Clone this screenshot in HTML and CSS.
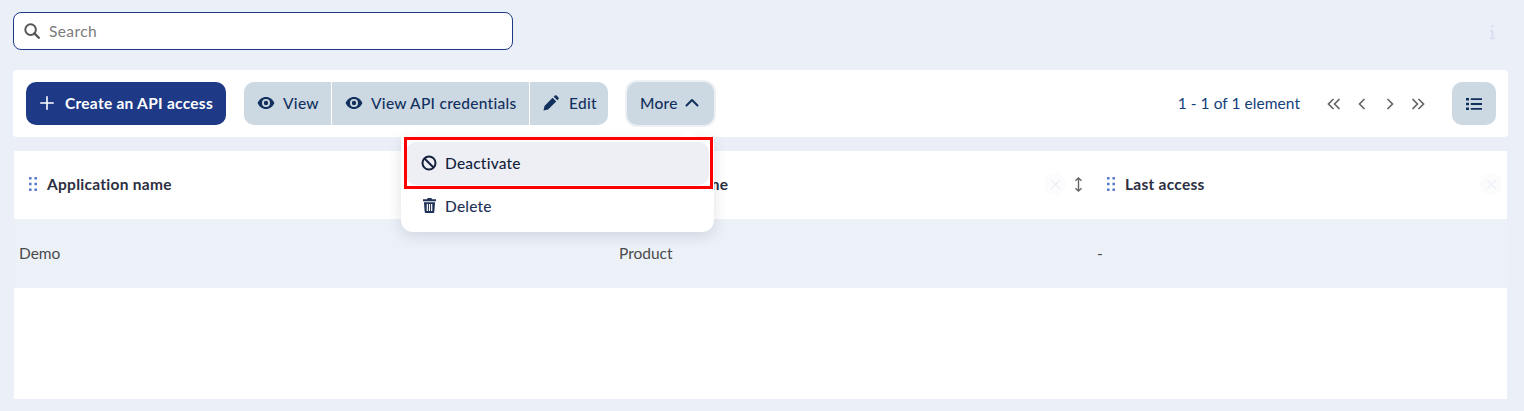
FILE: index.html
```html
<!DOCTYPE html>
<html lang="en">
<head>
<meta charset="utf-8">
<title>API access</title>
<link rel="stylesheet" href="styles.css">
</head>
<body>
<div class="top">
  <label class="search">
    <svg class="search-ic" viewBox="0 0 16 16"><circle cx="6.600" cy="6.600" r="5.300" fill="none" stroke="currentColor" stroke-width="2"/><path d="M10.400 10.400 14.800 14.800" stroke="currentColor" stroke-width="2.300" stroke-linecap="round"/></svg>
    <input class="search-input" type="text" placeholder="Search">
  </label>
  <svg class="info" viewBox="0 0 8 18"><path d="M2.600 0.800h2.600v3H2.600zM1 6.600h4.200v8.600H7v2H1v-2h1.800V8.600H1z" fill="currentColor"/></svg>
</div>

<div class="toolbar">
  <button class="btn primary">
    <svg class="ic plus" viewBox="0 0 14 14"><path d="M7 .8v12.400M.8 7h12.400" stroke="currentColor" stroke-width="1.600" stroke-linecap="round"/></svg>
    Create an API access
  </button>
  <div class="group">
    <button class="btn seg seg-view">
      <svg class="ic eye" viewBox="0 0 18 14"><path d="M9 1C5.200 1 2 3.600.6 7 2 10.400 5.200 13 9 13s7-2.600 8.400-6C16 3.600 12.800 1 9 1zm0 10a4 4 0 1 1 0-8 4 4 0 0 1 0 8zm0-6.200a2.200 2.200 0 1 0 0 4.400 2.200 2.200 0 0 0 0-4.400z" fill="currentColor" fill-rule="evenodd"/></svg>
      View
    </button>
    <button class="btn seg seg-cred">
      <svg class="ic eye" viewBox="0 0 18 14"><path d="M9 1C5.200 1 2 3.600.6 7 2 10.400 5.200 13 9 13s7-2.600 8.400-6C16 3.600 12.800 1 9 1zm0 10a4 4 0 1 1 0-8 4 4 0 0 1 0 8zm0-6.200a2.200 2.200 0 1 0 0 4.400 2.200 2.200 0 0 0 0-4.400z" fill="currentColor" fill-rule="evenodd"/></svg>
      View API credentials
    </button>
    <button class="btn seg seg-edit">
      <svg class="ic pen" viewBox="0 0 16 16"><path d="M0.500 15.500l1-4.600L9.600 2.800l3.600 3.600-8.100 8.100zM10.700 1.700l1-1c.6-.6 1.500-.6 2.100 0l1.500 1.500c.6.6.6 1.500 0 2.100l-1 1z" fill="currentColor"/></svg>
      Edit
    </button>
  </div>
  <div class="more-wrap">
    <button class="btn more">
      More
      <svg class="ic chev" viewBox="0 0 14 9"><path d="M1.500 7.500 7 2l5.500 5.500" fill="none" stroke="currentColor" stroke-width="2" stroke-linecap="round" stroke-linejoin="round"/></svg>
    </button>
    <div class="menu">
      <div class="menu-item active">
        <svg class="ic ban" viewBox="0 0 16 16"><circle cx="8" cy="8" r="6.500" fill="none" stroke="currentColor" stroke-width="2"/><path d="M3.500 3.500l9 9" stroke="currentColor" stroke-width="2"/></svg>
        Deactivate
      </div>
      <div class="menu-item">
        <svg class="ic trash" viewBox="0 0 14 16"><path d="M5 0h4l.7 1.400H14v2H0v-2h4.300zM1 4.500h12l-.8 10.100c0 .8-.7 1.400-1.400 1.400H3.200c-.7 0-1.400-.6-1.400-1.400zM4 6.500v7.500h1.300V6.500zm2.350 0v7.500h1.300V6.500zm2.350 0v7.500H10V6.500z" fill="currentColor" fill-rule="evenodd"/></svg>
        Delete
      </div>
    </div>
  </div>
  <div class="pager">
    <span class="count">1 - 1 of 1 element</span>
    <div class="pager-nav">
      <svg class="pg" viewBox="0 0 14 12"><path d="M6.500 1 1.500 6l5 5M12.500 1l-5 5 5 5" fill="none" stroke="currentColor" stroke-width="1.700"/></svg>
      <svg class="pg" viewBox="0 0 14 12"><path d="M9.500 1 4.500 6l5 5" fill="none" stroke="currentColor" stroke-width="1.700"/></svg>
      <svg class="pg" viewBox="0 0 14 12"><path d="M4.500 1 9.500 6l-5 5" fill="none" stroke="currentColor" stroke-width="1.700"/></svg>
      <svg class="pg" viewBox="0 0 14 12"><path d="M1.500 1l5 5-5 5M7.500 1l5 5-5 5" fill="none" stroke="currentColor" stroke-width="1.700"/></svg>
    </div>
    <button class="btn list">
      <svg class="ic" viewBox="0 0 16 12"><path d="M0 0h3v2.400H0zM0 4.800h3v2.400H0zM0 9.600h3V12H0zM4.800.3H16v1.800H4.800zM4.800 5.100H16v1.800H4.800zM4.800 9.900H16v1.800H4.800z" fill="currentColor"/></svg>
    </button>
  </div>
</div>

<div class="table">
  <div class="row head">
    <div class="cell c1">
      <svg class="grip" viewBox="0 0 8 14"><path d="M0 0h2.600v2.600H0zM5.400 0H8v2.600H5.400zM0 5.700h2.600v2.600H0zM5.400 5.700H8v2.600H5.400zM0 11.400h2.600V14H0zM5.400 11.400H8V14H5.400z" fill="currentColor"/></svg>
      <span class="title">Application name</span>
    </div>
    <div class="cell c2">
      <svg class="grip" viewBox="0 0 8 14"><path d="M0 0h2.600v2.600H0zM5.400 0H8v2.600H5.400zM0 5.700h2.600v2.600H0zM5.400 5.700H8v2.600H5.400zM0 11.400h2.600V14H0zM5.400 11.400H8V14H5.400z" fill="currentColor"/></svg>
      <span class="title">Offer name</span>
      <span class="close"><svg viewBox="0 0 10 10"><path d="M1 1l8 8M9 1l-8 8" stroke="currentColor" stroke-width="1"/></svg></span>
      <svg class="sort" viewBox="0 0 8 14"><path d="M4 1v12M1.200 3.600 4 1l2.800 2.600M1.200 10.400 4 13l2.800-2.600" fill="none" stroke="currentColor" stroke-width="1.300"/></svg>
    </div>
    <div class="cell c3">
      <svg class="grip" viewBox="0 0 8 14"><path d="M0 0h2.600v2.600H0zM5.400 0H8v2.600H5.400zM0 5.700h2.600v2.600H0zM5.400 5.700H8v2.600H5.400zM0 11.400h2.600V14H0zM5.400 11.400H8V14H5.400z" fill="currentColor"/></svg>
      <span class="title">Last access</span>
      <span class="close"><svg viewBox="0 0 10 10"><path d="M1 1l8 8M9 1l-8 8" stroke="currentColor" stroke-width="1"/></svg></span>
    </div>
  </div>
  <div class="row body">
    <div class="val">Demo</div>
    <div class="val">Product</div>
    <div class="val">-</div>
  </div>
</div>

<div class="mark"></div>
</body>
</html>
```
FILE: styles.css
```css
* { box-sizing: border-box; }
html, body { height: 100%; }
body {
  margin: 0;
  height: 411px;
  overflow: hidden;
  background: #ebf0f8;
  font-family: "Lato", "Liberation Sans", sans-serif;
  font-size: 15.5px;
  color: #1f2d4d;
  position: relative;
  padding: 12px 16px 0 13px;
}
button { font: inherit; border: 0; }
.top { display: flex; align-items: center; justify-content: space-between; height: 38px; }
.search {
  width: 500px; height: 38px; display: flex; align-items: center; gap: 9px;
  padding-left: 10px; background: #fff; border: 1px solid #1e3a87; border-radius: 8px; color: #555;
}
.search-ic { width: 16px; height: 16px; flex: none; }
.search-input {
  border: 0; outline: 0; flex: 1; font: inherit; letter-spacing: .4px; background: transparent; padding: 0; color: #555;
}
.search-input::placeholder { color: #7b7b7b; opacity: 1; }
.info { width: 7px; height: 16px; color: #d9dfee; margin-top: 2px; margin-right: 12px; }
.toolbar {
  margin-top: 20px; height: 67px; background: #fff; border-radius: 4px; width: 1495px;
  display: flex; align-items: center; padding: 0 12px 0 13px;
}
.btn {
  height: 43px; display: inline-flex; align-items: center; gap: 8px; background: #ccd8e2; color: #12305e;
  font-weight: 500; padding: 0 13px 2px; white-space: nowrap; letter-spacing: .27px;
}
.ic { flex: none; width: 16px; height: 14px; }
.primary { background: #1e3a87; color: #fff; border-radius: 10px; width: 200px; font-weight: 700; padding: 0 13px 2px 14px; gap: 11px; }
.plus { width: 14px; height: 14px; }
.group { display: flex; margin-left: 18px; gap: 1px; background: #fff; }
.seg { padding-left: 13px; padding-right: 0; }
.seg:first-child { border-radius: 10px 0 0 10px; }
.seg:last-child { border-radius: 0 10px 10px 0; }
.seg .eye { width: 18px; height: 14px; }
.seg-view { width: 87px; }
.seg-cred { width: 197px; }
.seg-edit { width: 78px; gap: 10px; }
.pen { height: 16px; }
.more-wrap { position: relative; margin-left: 19px; }
.more {
  border-radius: 10px; width: 87px; box-shadow: 0 0 0 2px #edf1f6; gap: 7px; padding: 0 13px 2px;
}
.chev { width: 14px; height: 9px; }
.menu {
  position: absolute; left: -226px; top: 55px; width: 313px; height: 95px; background: #fff; border-radius: 0 0 12px 12px;
  box-shadow: 0 4px 14px rgba(40, 50, 80, .14); padding: 5px; z-index: 2; color: #1f3257; letter-spacing: .2px;
}
.menu::before {
  content: ""; position: absolute; right: 20px; top: -6px; width: 12px; height: 12px; background: #fff; transform: rotate(45deg);
}
.menu-item { position: relative; height: 43px; display: flex; align-items: center; gap: 8px; padding: 0 0 2px 15px; border-radius: 10px; font-weight: 500; }
.menu-item.active { background: #edeff5; color: #141f3c; }
.ban { width: 16px; height: 16px; }
.trash { width: 13px; height: 15px; margin: 0 1px 0 2px; }
.pager { margin-left: auto; display: flex; align-items: center; }
.count { color: #12407a; padding-bottom: 2px; letter-spacing: .05px; }
.pager-nav { display: flex; margin-left: 27px; gap: 14px; color: #666; }
.pg { width: 14px; height: 12px; }
.list { width: 44px; justify-content: center; border-radius: 10px; margin-left: 27px; padding: 0; }
.table { margin-top: 14px; margin-left: 1px; width: 1493px; height: 248px; background: #fff; }
.row { display: grid; grid-template-columns: 600px 478px 415px; }
.head { height: 68px; }
.cell { display: flex; align-items: center; padding: 0 0 2px 15px; font-weight: 700; color: #2c2f3f; letter-spacing: .27px; }
.grip { width: 8px; height: 14px; color: #5b7fc9; flex: none; }
.title { margin-left: 10px; }
.close {
  margin-left: auto; width: 22px; height: 22px; border-radius: 50%; background: #fcfcfd; color: #e9edf8;
  display: flex; align-items: center; justify-content: center;
}
.close svg { width: 11px; height: 11px; }
.c2 .close { margin-right: 8px; }
.c3 .close { margin-right: 5px; }
.sort { width: 9px; height: 15px; color: #666; margin-right: 9px; flex: none; }
.body { height: 69px; background: #ecf1f8; align-items: center; padding-bottom: 2px; }
.val { padding-left: 5px; color: #4a4a4a; }
.mark { position: absolute; left: 404px; top: 137px; width: 309px; height: 52px; border: 3px solid #f00; z-index: 3; }
```
